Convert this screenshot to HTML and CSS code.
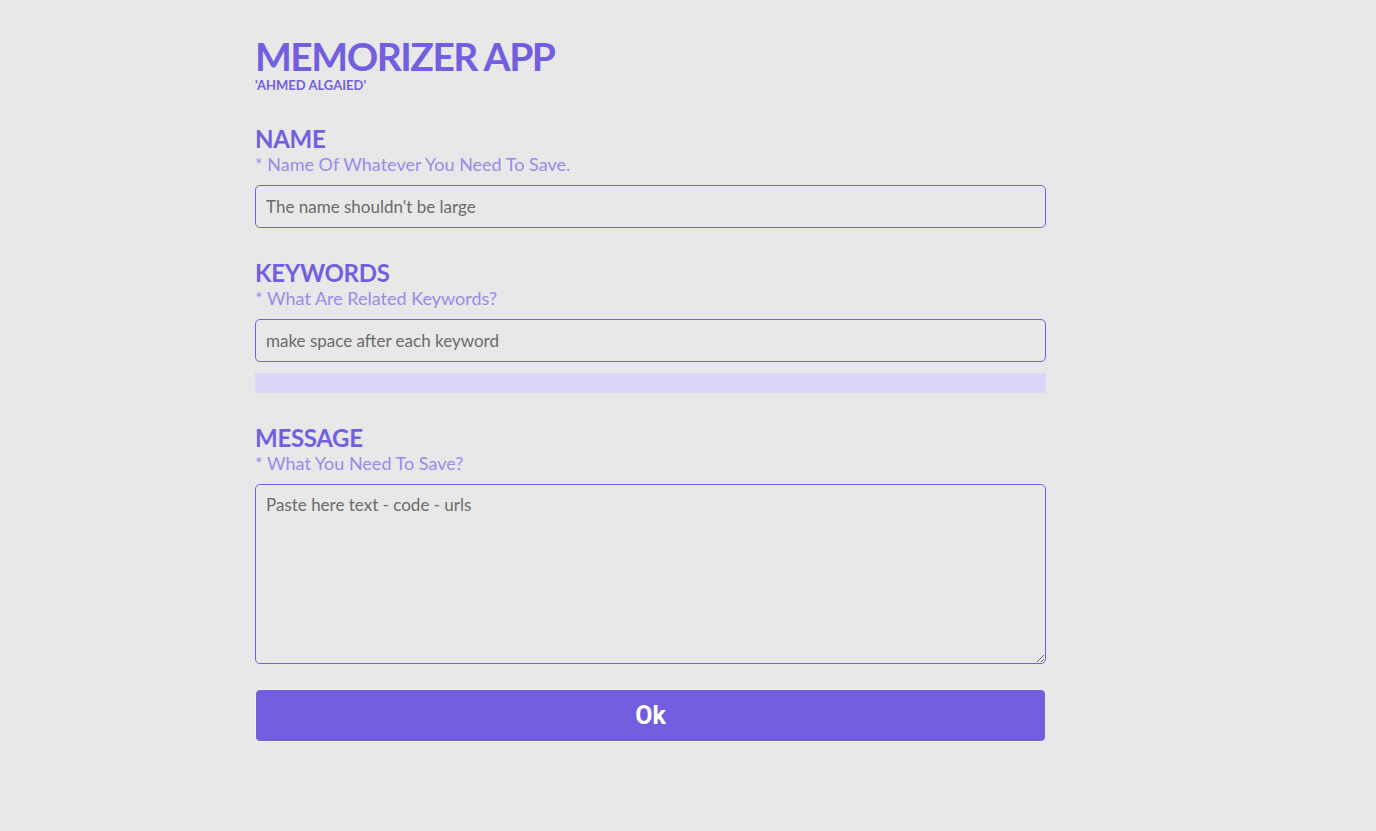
FILE: index.html
```html
<!DOCTYPE html>
<html>
<head>
<meta charset="utf-8">
<link rel="stylesheet" href="styles.css">
</head>
<body>
<main class="page">
  <header class="head">
    <h1 class="title">MEMORIZER APP</h1>
    <div class="author">'AHMED ALGAIED'</div>
  </header>
  <section class="field">
    <h2 class="label">NAME</h2>
    <p class="hint">* Name Of Whatever You Need To Save.</p>
    <input class="input" type="text" placeholder="The name shouldn't be large">
  </section>
  <section class="field">
    <h2 class="label">KEYWORDS</h2>
    <p class="hint">* What Are Related Keywords?</p>
    <input class="input" type="text" placeholder="make space after each keyword">
    <div class="tags"></div>
  </section>
  <section class="field">
    <h2 class="label">MESSAGE</h2>
    <p class="hint">* What You Need To Save?</p>
    <textarea class="area" placeholder="Paste here text - code - urls"></textarea>
  </section>
  <button class="ok" type="button">Ok</button>
</main>
</body>
</html>
```

FILE: styles.css
```css
html, body {
  margin: 0;
  padding: 0;
  background: #e8e8e8;
}
body {
  font-family: "Lato", "Open Sans", sans-serif;
}
.page {
  width: 791px;
  margin: 0 0 0 255px;
  padding-top: 35px;
  display: flex;
  flex-direction: column;
}
.title {
  margin: 0;
  font-size: 39px;
  line-height: 42px;
  font-weight: 700;
  letter-spacing: -1.5px;
  color: #735ee0;
}
.author {
  font-size: 13px;
  line-height: 16px;
  font-weight: 700;
  color: #735ee0;
}
.field {
  display: flex;
  flex-direction: column;
}
.head + .field { margin-top: 32px; }
.label {
  margin: 0;
  font-size: 24px;
  line-height: 28px;
  font-weight: 700;
  letter-spacing: -0.3px;
  color: #735ee0;
}
.hint {
  margin: 0 0 10px;
  font-size: 18px;
  line-height: 22px;
  color: #9a8aea;
}
.input, .area {
  box-sizing: border-box;
  width: 791px;
  border: 1px solid #735ee0;
  border-radius: 5px;
  background: #e8e8e8;
  font-family: inherit;
  font-size: 17px;
  padding: 0 10px;
  color: #666;
  outline: none;
}
.input { height: 43px; }
.input::placeholder, .area::placeholder { color: #6b6b6b; }
.area {
  height: 180px;
  padding-top: 9px;
  resize: vertical;
}
.tags {
  margin-top: 11px;
  height: 20px;
  background: #dcd7f8;
}
.field + .field { margin-top: 31px; }
.ok {
  margin-top: 25px;
  height: 53px;
  box-sizing: border-box;
  border: 1px solid #f4f4f4;
  border-radius: 5px;
  background: #735ee0;
  color: #fff;
  font-family: "Roboto", "Liberation Sans", sans-serif;
  font-weight: 700;
  font-size: 25px;
}
```
